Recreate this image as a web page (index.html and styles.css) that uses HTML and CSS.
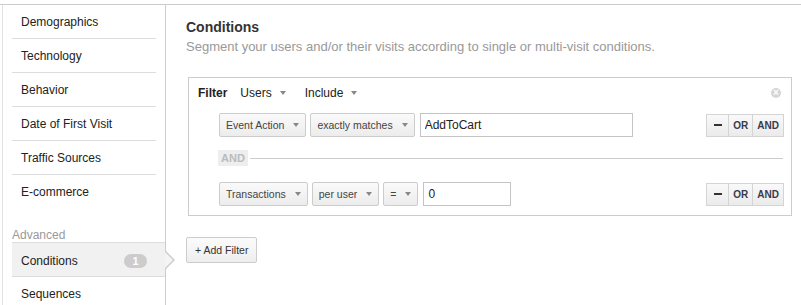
FILE: index.html
```html
<!DOCTYPE html>
<html>
  <head>
    <title>Segment - Conditions</title>
    <link rel="stylesheet" href="styles.css">
  </head>

  <body>
    <div class="frame">
      <div class="sidebar">
        <ul class="menu">
          <li>Demographics</li>
          <li>Technology</li>
          <li>Behavior</li>
          <li>Date of First Visit</li>
          <li>Traffic Sources</li>
          <li class="last">E-commerce</li>
        </ul>
        <div class="menu-label">Advanced</div>
        <ul class="menu">
          <li class="activo">Conditions <span class="badge">1</span></li>
          <li class="last">Sequences</li>
        </ul>
      </div>

      <div class="main">
        <h2>Conditions</h2>
        <p class="sub">Segment your users and/or their visits according to single or multi-visit conditions.</p>

        <div class="filtro">
          <div class="filtro-cabecera">
            <b>Filter</b>
            <span class="desplegable">Users <i class="flecha"></i></span>
            <span class="desplegable">Include <i class="flecha"></i></span>
            <span class="cerrar">&times;</span>
          </div>

          <div class="condiciones">
            <div class="fila">
              <span class="boton">Event Action <i class="flecha"></i></span>
              <span class="boton">exactly matches <i class="flecha"></i></span>
              <input class="campo ancho" type="text" value="AddToCart">
              <div class="grupo">
                <span class="g-boton"><i class="menos"></i></span>
                <span class="g-boton">OR</span>
                <span class="g-boton">AND</span>
              </div>
            </div>

            <div class="separador"><span>AND</span></div>

            <div class="fila">
              <span class="boton">Transactions <i class="flecha"></i></span>
              <span class="boton">per user <i class="flecha"></i></span>
              <span class="boton">= <i class="flecha"></i></span>
              <input class="campo corto" type="text" value="0">
              <div class="grupo">
                <span class="g-boton"><i class="menos"></i></span>
                <span class="g-boton">OR</span>
                <span class="g-boton">AND</span>
              </div>
            </div>
          </div>
        </div>

        <button class="agregar">+ Add Filter</button>
      </div>
    </div>
  </body>
</html>
```

FILE: styles.css
```css
body {
  font-family: "Liberation Sans", Arial, sans-serif;
  margin: 0;
  padding-top: 4px;
  color: #222;
  background: #fff;
  overflow: hidden;
}
.frame {
  display: flex;
  border-top: 1px solid #ccc;
  height: 300px;
}
.sidebar {
  width: 164px;
  box-sizing: border-box;
  margin-left: 2px;
  padding: 0 9px;
  border-left: 1px solid #e2e2e2;
  border-right: 1px solid #ccc;
  font-size: 12px;
}
.menu {
  list-style: none;
  margin: 0;
  padding: 0;
}
.menu li {
  height: 33px;
  line-height: 35px;
  padding-left: 9px;
  border-bottom: 1px solid #ddd;
}
.menu li.last {
  border-bottom: none;
}
.menu li.activo {
  position: relative;
  display: flex;
  justify-content: space-between;
  align-items: center;
  height: 31px;
  line-height: 16px;
  margin-right: -9px;
  padding-top: 2px;
  padding-right: 18px;
  background-color: #f1f1f1;
  border-top: 1px solid #ddd;
}
.menu li.activo:before,
.menu li.activo:after {
  content: "";
  position: absolute;
  top: 50%;
  width: 0;
  height: 0;
  border-style: solid;
  border-color: transparent;
}
.menu li.activo:before {
  right: -10px;
  margin-top: -9px;
  border-width: 9px 0 9px 9px;
  border-left-color: #ccc;
}
.menu li.activo:after {
  right: -8px;
  margin-top: -8px;
  border-width: 8px 0 8px 8px;
  border-left-color: #f4f4f4;
}
.badge {
  width: 23px;
  height: 14px;
  line-height: 14px;
  border-radius: 7px;
  background-color: #ccc;
  color: #fff;
  font-weight: bold;
  font-size: 11px;
  text-align: center;
}
.menu-label {
  margin-top: 20px;
  line-height: 14px;
  color: #999;
}
.main {
  flex: 1;
  padding: 13px 9px 0 20px;
}
h2 {
  margin: 0;
  font-size: 14px;
  line-height: 18px;
  color: #333;
}
.sub {
  margin: 3px 0 0;
  font-size: 13px;
  line-height: 16px;
  color: #999;
}
.filtro {
  margin: 22px 0 0 2px;
  border: 1px solid #ccc;
}
.filtro-cabecera {
  display: flex;
  align-items: center;
  padding: 8px 10px 0 9px;
  line-height: 14px;
  font-size: 12px;
}
.filtro-cabecera b {
  margin-right: 13px;
}
.desplegable {
  display: flex;
  align-items: center;
  margin-right: 19px;
}
.flecha {
  display: inline-block;
  width: 0;
  height: 0;
  margin-left: 8px;
  border-style: solid;
  border-width: 4px 3.5px 0;
  border-color: #888 transparent transparent;
}
.cerrar {
  margin-left: auto;
  width: 10px;
  height: 10px;
  line-height: 10px;
  border-radius: 50%;
  background-color: #d6d6d6;
  color: #fff;
  font-size: 10px;
  font-weight: bold;
  text-align: center;
}
.condiciones {
  padding: 13px 7px 9px 30px;
}
.fila {
  display: flex;
  align-items: center;
  height: 24px;
}
.boton {
  display: flex;
  align-items: center;
  height: 22px;
  margin-right: 4px;
  padding: 0 6px;
  border: 1px solid #ccc;
  border-radius: 2px;
  background: linear-gradient(#fafafa, #ececec);
  font-size: 10.5px;
  color: #444;
}
.boton .flecha {
  margin-left: 9px;
}
.campo {
  height: 24px;
  box-sizing: border-box;
  margin: 0 0 0 1px;
  padding: 0 4px;
  border: 1px solid #c4c4c4;
  font-family: "Liberation Sans", Arial, sans-serif;
  font-size: 12px;
  color: #222;
}
.ancho {
  width: 213px;
}
.corto {
  width: 88px;
}
.grupo {
  display: flex;
  margin-left: auto;
}
.g-boton {
  display: flex;
  align-items: center;
  justify-content: center;
  height: 21px;
  padding: 0 4px;
  border: 1px solid #d4d4d4;
  border-left: none;
  background: linear-gradient(#f9f9f9, #ebebeb);
  font-size: 10px;
  font-weight: bold;
  color: #3a3a4a;
}
.g-boton:first-child {
  width: 13px;
  border-left: 1px solid #d4d4d4;
}
.menos {
  display: block;
  width: 8px;
  height: 2px;
  background-color: #333;
}
.separador {
  display: flex;
  align-items: center;
  margin: 13px 1px 16px -1px;
}
.separador span {
  height: 16px;
  line-height: 16px;
  padding: 0 3px;
  background-color: #eee;
  color: #bbb;
  font-size: 11px;
  font-weight: bold;
}
.separador:after {
  content: "";
  flex: 1;
  margin-left: 2px;
  border-top: 1px solid #ccc;
}
.agregar {
  margin-top: 21px;
  height: 26px;
  padding: 0 8px;
  border: 1px solid #ccc;
  border-radius: 2px;
  background: linear-gradient(#fbfbfb, #eeeeee);
  font-family: "Liberation Sans", Arial, sans-serif;
  font-size: 10.5px;
  color: #333;
}
```
